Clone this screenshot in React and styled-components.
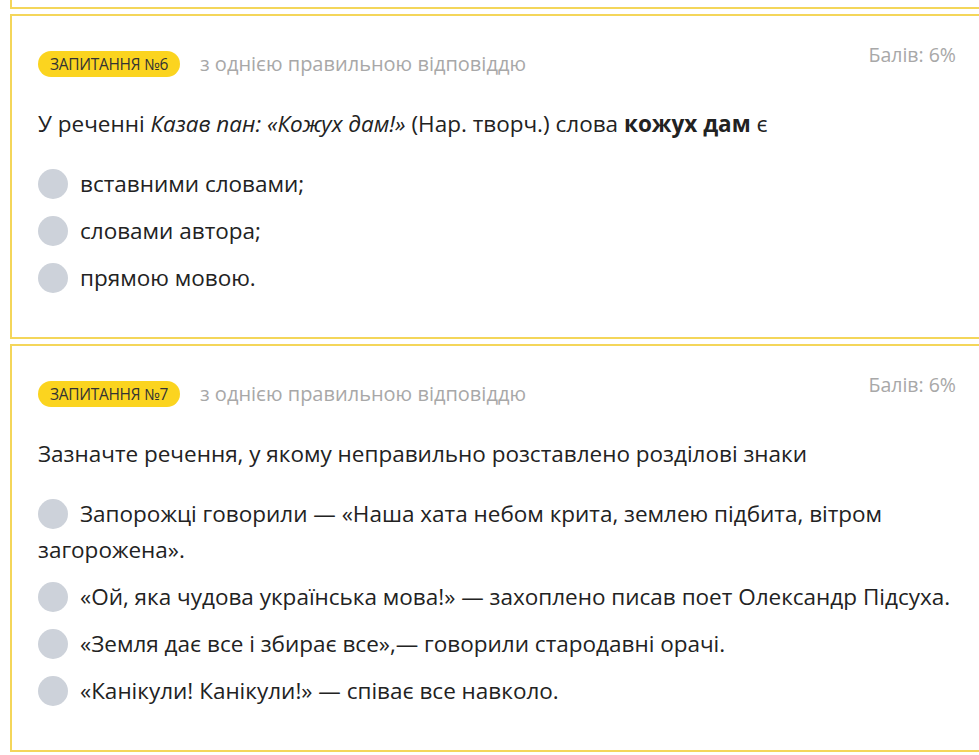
import React from "react";
import styled, { createGlobalStyle } from "styled-components";

const GlobalStyle = createGlobalStyle`
  html, body {
    margin: 0;
    padding: 0;
    overflow: hidden;
    background: #fff;
  }
  body {
    font-family: "Open Sans", "Noto Sans", sans-serif;
    color: #222;
  }
`;

const Page = styled.div`
  width: 974px;
  margin-left: 10px;
  display: flex;
  flex-direction: column;
  gap: 5px;
`;

const Card = styled.section`
  border: 2px solid #f4d65a;
  padding: 27px 26px 41px;
`;

// the previous card, scrolled so only its bottom edge shows
const CardTail = styled.div`
  height: 7px;
  border: 2px solid #f4d65a;
  border-top: none;
`;

const Header = styled.div`
  display: flex;
  align-items: flex-start;
  justify-content: space-between;
`;

const Meta = styled.div`
  display: flex;
  align-items: center;
  gap: 20px;
  margin-top: 7px;
`;

const Badge = styled.span`
  display: inline-flex;
  align-items: center;
  height: 26px;
  padding: 0 12px;
  border-radius: 13px;
  background: #fbd41f;
  color: #333;
  font-size: 15.5px;
  text-transform: uppercase;
  letter-spacing: -0.3px;
`;

const Kind = styled.span`
  color: #a8a8a8;
  font-size: 20px;
`;

const Score = styled.span`
  color: #a8a8a8;
  font-size: 19.5px;
  line-height: 24px;
`;

const Question = styled.p`
  margin: 29px 0 24px;
  font-size: 22.5px;
  line-height: 36px;
  color: #222;
`;

const Options = styled.div`
  display: flex;
  flex-direction: column;
  gap: 11px;
`;

const Option = styled.label`
  display: block;
  font-size: 22.5px;
  line-height: 36px;
  color: #222;
  cursor: pointer;
`;

const Radio = styled.span`
  display: inline-block;
  width: 30px;
  height: 30px;
  border-radius: 50%;
  background: #cdd2da;
  vertical-align: middle;
  margin: -4px 12px 0 0;
`;

const questions = [
  {
    num: 6,
    text: (
      <>
        У реченні <i>Казав пан: «Кожух дам!»</i> (Нар. творч.) слова{" "}
        <b>кожух дам</b> є
      </>
    ),
    options: ["вставними словами;", "словами автора;", "прямою мовою."],
  },
  {
    num: 7,
    text: "Зазначте речення, у якому неправильно розставлено розділові знаки",
    options: [
      "Запорожці говорили — «Наша хата небом крита, землею підбита, вітром загорожена».",
      "«Ой, яка чудова українська мова!» — захоплено писав поет Олександр Підсуха.",
      "«Земля дає все і збирає все»,— говорили стародавні орачі.",
      "«Канікули! Канікули!» — співає все навколо.",
    ],
  },
];

export default function App() {
  return (
    <>
      <GlobalStyle />
      <Page>
        <CardTail />
        {questions.map((q) => (
          <Card key={q.num}>
            <Header>
              <Meta>
                <Badge>Запитання №{q.num}</Badge>
                <Kind>з однією правильною відповіддю</Kind>
              </Meta>
              <Score>Балів: 6%</Score>
            </Header>
            <Question>{q.text}</Question>
            <Options>
              {q.options.map((o) => (
                <Option key={o}>
                  <Radio />
                  {o}
                </Option>
              ))}
            </Options>
          </Card>
        ))}
      </Page>
    </>
  );
}
